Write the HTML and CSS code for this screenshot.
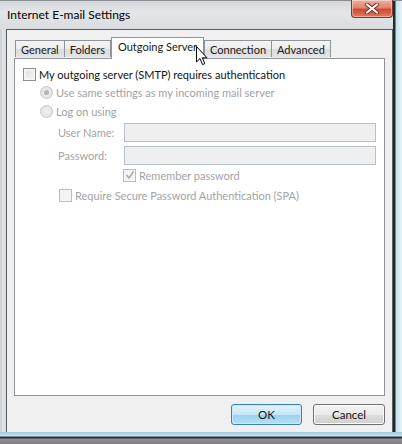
FILE: index.html
```html
<!DOCTYPE html>
<html>
<head>
<meta charset="utf-8">
<link rel="stylesheet" href="styles.css">
</head>
<body>
<div class="window">
  <div class="titlebar">
    <span class="title">Internet E-mail Settings</span>
    <div class="close">
      <svg width="16" height="11" viewBox="0 0 16 11"><path d="M3 1.5 L13 9.5 M13 1.5 L3 9.5" stroke="#7a2a1c" stroke-width="4" stroke-linecap="round"/><path d="M3 1.5 L13 9.5 M13 1.5 L3 9.5" stroke="#fff" stroke-width="2.2" stroke-linecap="round"/></svg>
    </div>
  </div>
  <div class="client">
    <div class="tabs">
      <div class="tab">General</div>
      <div class="tab">Folders</div>
      <div class="tab active">Outgoing Server</div>
      <div class="tab">Connection</div>
      <div class="tab">Advanced</div>
    </div>
    <div class="panel">
      <div class="row r1"><span class="cb"></span><span>My outgoing server (SMTP) requires authentication</span></div>
      <div class="row r2 dis indent1"><span class="radio checked"></span><span>Use same settings as my incoming mail server</span></div>
      <div class="row r3 dis indent1"><span class="radio"></span><span>Log on using</span></div>
      <div class="field dis"><span class="lbl">User Name:</span><span class="input"></span></div>
      <div class="field dis f2"><span class="lbl">Password:</span><span class="input"></span></div>
      <div class="row r4 dis"><span class="cb checkedcb"><svg width="10" height="10" viewBox="0 0 10 10"><path d="M1.5 5 L4 8 L8.5 1.5" fill="none" stroke="#a8a8a8" stroke-width="1.4"/></svg></span><span>Remember password</span></div>
      <div class="row r5 dis"><span class="cb"></span><span>Require Secure Password Authentication (SPA)</span></div>
    </div>
    <div class="buttons">
      <div class="btn ok">OK</div>
      <div class="btn cancel">Cancel</div>
    </div>
  </div>
  <div class="bottomframe"></div>
  <svg class="cursor" width="13" height="20" viewBox="0 0 13 20"><path d="M0.5 0.5 L0.5 16 L4 12.6 L6.6 18.6 L8.8 17.6 L6.3 11.8 L11 11.8 Z" fill="#fff" stroke="#000" stroke-width="1"/></svg>
</div>
</body>
</html>
```
FILE: styles.css
```css
* { box-sizing: border-box; }
html, body { margin: 0; padding: 0; }
body {
  width: 402px; height: 444px; overflow: hidden;
  background: #7c8288;
  font-family: "Lato", "Open Sans", sans-serif;
  font-size: 11px;
  color: #111;
}
.window {
  position: relative;
  width: 402px; height: 444px;
  background: linear-gradient(90deg, #c9cdd0 0, #e2e4e6 3px, #d6d9dc 6px, #d6d9dc 393px, #262a2e 393px, #262a2e 395px, #bfe4ee 396px, #e8f4f8 402px);
  display: flex; flex-direction: column;
  border-top: 1px solid #8a8f94;
}
.titlebar {
  height: 28px;
  display: flex; justify-content: space-between; align-items: flex-start;
  background: linear-gradient(180deg, #d4d7da 0, #e4e6e8 40%, #d9dcdf 100%);
  margin-right: 9px;
}
.title {
  font-size: 12px; color: #000; padding: 6px 0 0 7px;
}
.close {
  width: 42px; height: 18px; margin-top: -1px;
  border: 1px solid #7a3a2e; border-top: none;
  border-radius: 0 0 4px 4px;
  background: linear-gradient(180deg, #eeb0a0 0, #e08470 45%, #cf4b30 55%, #e07a5e 100%);
  display: flex; align-items: center; justify-content: center;
  box-shadow: inset 0 0 0 1px rgba(255,255,255,0.4);
}
.client {
  margin-left: 6px;
  width: 387px; height: 403px;
  background: #f0f0f0;
  border: 1px solid #5a5e63;
  border-bottom: none;
  display: flex; flex-direction: column;
}
.tabs {
  display: flex; align-items: flex-end;
  height: 28px; padding-left: 8px;
  position: relative; z-index: 1;
}
.tab {
  height: 17px;
  padding: 0 5px;
  border: 1px solid #8f939a; border-bottom: none;
  margin-right: -1px;
  background: linear-gradient(180deg, #f4f4f4 0, #ececec 50%, #dcdcdc 51%, #e3e3e3 100%);
  font-size: 11px; line-height: 17px; color: #1a1a1a;
  margin-bottom: 1px;
}
.tab.active {
  height: 22px; background: #fff;
  margin-bottom: -1px; margin-left: 1px; margin-right: 0;
  padding: 0 6px; line-height: 18px;
  position: relative; z-index: 2;
}
.panel {
  margin-left: 7px;
  width: 371px; height: 338px;
  background: #fff;
  border: 1px solid #8f939a;
  padding: 7px 8px 0 8px;
  display: flex; flex-direction: column;
}
.row { display: flex; align-items: center; height: 17px; }
.row .cb, .row .radio { margin-right: 3px; flex: none; }
.r2 { margin-top: 1px; }
.r3 { margin-top: 2px; }
.indent1 { padding-left: 17px; }
.dis { color: #a3a3a3; }
.cb {
  width: 13px; height: 13px;
  border: 1px solid #8e8f8f;
  background: linear-gradient(135deg, #dcdcdc 0, #f7f7f7 100%);
  box-shadow: inset 0 0 0 2px #f4f4f4;
  display: inline-flex; align-items: center; justify-content: center;
}
.dis .cb { border-color: #bdbdbd; background: #f4f4f4; box-shadow: none; }
.radio {
  width: 13px; height: 13px; border-radius: 50%;
  border: 1px solid #c4c4c4;
  background: radial-gradient(circle, #f0f0f0 0, #e0e0e0 100%);
  display: inline-flex; align-items: center; justify-content: center;
}
.radio.checked::after {
  content: ""; width: 5px; height: 5px; border-radius: 50%; background: #b5b5b5;
}
.field { display: flex; align-items: center; height: 19px; margin-top: 3px; padding-left: 35px; }
.field.f2 { margin-top: 4px; }
.lbl { width: 66px; flex: none; }
.input {
  width: 252px; height: 19px;
  border: 1px solid #b7c2cf;
  background: #efefef;
}
.r4 { margin-top: 2px; padding-left: 100px; height: 16px; }
.r5 { margin-top: 4px; padding-left: 36px; height: 16px; }
.buttons {
  display: flex; justify-content: flex-end; gap: 11px;
  margin-top: 8px; padding-right: 0; width: 378px;
}
.btn {
  height: 21px; border-radius: 3px;
  font-size: 11.5px; color: #111;
  display: flex; align-items: center; justify-content: center;
}
.ok {
  width: 71px;
  border: 1px solid #3c7fb1;
  background: linear-gradient(180deg, #e5f4fc 0, #c4e5f6 50%, #98d1ef 51%, #b6e0f5 100%);
  box-shadow: inset 0 0 0 1px #c6ecfc;
}
.cancel {
  width: 72px;
  border: 1px solid #707070;
  background: linear-gradient(180deg, #f2f2f2 0, #ebebeb 50%, #dddddd 51%, #cfcfcf 100%);
  box-shadow: inset 0 0 0 1px #fcfcfc;
}
.bottomframe {
  height: 12px;
  background: linear-gradient(180deg, #9fc7da 0, #b9dbe9 3px, #cfe7f0 4px, #2c3034 5px, #2c3034 6px, #8d9196 7px, #7d8186 12px);
  width: 402px;
}
.cursor { position: absolute; left: 196px; top: 45px; z-index: 10; }
```
